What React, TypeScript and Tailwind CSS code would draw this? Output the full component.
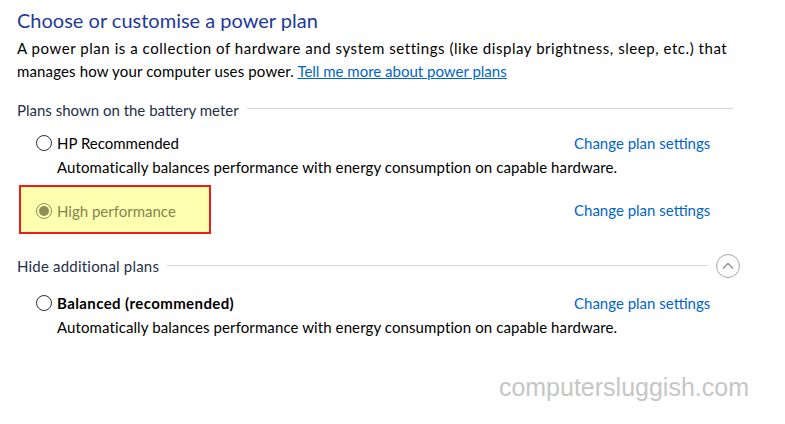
import React from "react";

const font = { fontFamily: '"Segoe UI", Lato, "Noto Sans", sans-serif' };

function Radio({ checked, disabled }: { checked?: boolean; disabled?: boolean }) {
  return (
    <span
      className={`flex h-4 w-4 shrink-0 items-center justify-center rounded-full border ${
        disabled ? "border-[#8f8f5c]" : "border-[#333333] bg-white"
      }`}
    >
      {checked && <span className="h-[10px] w-[10px] rounded-full bg-[#8f8f55]" />}
    </span>
  );
}

function Link2({ children }: { children: React.ReactNode }) {
  return <a className="text-[15px] leading-5 text-[#0066cc]">{children}</a>;
}

export default function App() {
  return (
    <div className="relative h-[424px] w-[785px] overflow-hidden bg-white px-[17px] pt-[6px]" style={font}>
      <h1 className="text-[20px] leading-[28px] text-[#1e3a96]">Choose or customise a power plan</h1>
      <p className="mt-[3px] whitespace-nowrap text-[15px] leading-[23px] text-black">
        <span className="tracking-[0.55px]">
          A power plan is a collection of hardware and system settings (like display brightness, sleep, etc.) that
        </span>
        <br />
        <span className="tracking-[0.15px]">manages how your computer uses power.</span>{" "}
        <a className="text-[#0066cc] underline">Tell me more about power plans</a>
      </p>

      {/* battery meter plans */}
      <div className="mt-[17px] flex w-[716px] items-center gap-2">
        <span className="text-[15px] leading-5 text-[#1e2f4a]">Plans shown on the battery meter</span>
        <span className="mt-[-3px] h-px flex-1 bg-[#d5d5d5]" />
      </div>

      <div className="mt-[13px] grid grid-cols-[557px_1fr] items-center">
        <label className="ml-[19px] flex items-center gap-[5px] text-[15px] leading-5 text-black">
          <Radio />
          HP Recommended
        </label>
        <Link2>Change plan settings</Link2>
      </div>
      <p className="mt-[4px] pl-[40px] text-[15px] leading-5 tracking-[0.1px] text-black">
        Automatically balances performance with energy consumption on capable hardware.
      </p>

      <div className="mt-[8px] grid grid-cols-[557px_1fr] items-center">
        <div className="ml-[2px] flex h-[49px] w-[192px] items-center gap-[5px] border-2 border-[#ee1c1c] bg-[#ffffb0] pl-[15px] pt-[2px] text-[15px] leading-5 text-[#85854f]">
          <Radio checked disabled />
          High performance
        </div>
        <Link2>Change plan settings</Link2>
      </div>

      {/* additional plans */}
      <div className="mt-[20px] flex w-[723px] items-center gap-2">
        <span className="text-[15px] leading-5 tracking-[0.2px] text-[#1e2f4a]">Hide additional plans</span>
        <span className="mt-[-2px] h-px flex-1 bg-[#d5d5d5]" />
        <span className="flex h-6 w-6 items-center justify-center rounded-full border border-[#a5a5a5]">
          <svg width="12" height="8" viewBox="0 0 12 8" fill="none" stroke="#8c8c8c" strokeWidth="1.3">
            <path d="M1 6.5 L6 1.5 L11 6.5" />
          </svg>
        </span>
      </div>

      <div className="mt-[15px] grid grid-cols-[557px_1fr] items-center">
        <label className="ml-[19px] flex items-center gap-[5px] text-[15px] font-bold leading-5 tracking-[0.4px] text-black">
          <Radio />
          Balanced (recommended)
        </label>
        <Link2>Change plan settings</Link2>
      </div>
      <p className="mt-[4px] pl-[40px] text-[15px] leading-5 tracking-[0.1px] text-black">
        Automatically balances performance with energy consumption on capable hardware.
      </p>

      <div className="mt-[34px] flex justify-end pr-[19px]">
        <span className="text-[25px] leading-8 text-[#c6c6c6]" style={{ fontFamily: '"Liberation Sans", Arial, sans-serif' }}>
          computersluggish.com
        </span>
      </div>
    </div>
  );
}
